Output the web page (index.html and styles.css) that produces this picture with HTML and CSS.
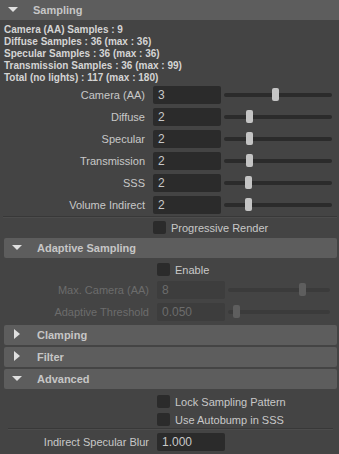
FILE: index.html
```html
<!DOCTYPE html>
<html lang="en">
<head>
  <meta charset="UTF-8" />
  <title>Render Settings - Sampling</title>
  <link rel="stylesheet" href="styles.css">
</head>
<body>
  <div class="frame">
    <div class="frame-head"><span class="arrow down"></span>Sampling</div>
    <div class="frame-body">
      <div class="info">
        <div>Camera (AA) Samples : 9</div>
        <div>Diffuse Samples : 36 (max : 36)</div>
        <div>Specular Samples : 36 (max : 36)</div>
        <div>Transmission Samples : 36 (max : 99)</div>
        <div>Total (no lights) : 117 (max : 180)</div>
      </div>
      <div class="rows">
        <div class="row">
          <span class="label">Camera (AA)</span>
          <span class="field">3</span>
          <span class="slider"><span class="thumb" style="left: 48px"></span></span>
        </div>
        <div class="row">
          <span class="label">Diffuse</span>
          <span class="field">2</span>
          <span class="slider"><span class="thumb" style="left: 22px"></span></span>
        </div>
        <div class="row">
          <span class="label">Specular</span>
          <span class="field">2</span>
          <span class="slider"><span class="thumb" style="left: 22px"></span></span>
        </div>
        <div class="row">
          <span class="label">Transmission</span>
          <span class="field">2</span>
          <span class="slider"><span class="thumb" style="left: 22px"></span></span>
        </div>
        <div class="row">
          <span class="label">SSS</span>
          <span class="field">2</span>
          <span class="slider"><span class="thumb" style="left: 21px"></span></span>
        </div>
        <div class="row">
          <span class="label">Volume Indirect</span>
          <span class="field">2</span>
          <span class="slider"><span class="thumb" style="left: 21px"></span></span>
        </div>
      </div>
      <div class="sep"></div>
      <div class="check-row first">
        <span class="box"></span>Progressive Render
      </div>

      <div class="frame sub adaptive-frame">
        <div class="frame-head"><span class="arrow down"></span>Adaptive Sampling</div>
        <div class="frame-body">
          <div class="check-row enable">
            <span class="box"></span>Enable
          </div>
          <div class="rows adaptive">
            <div class="row disabled">
              <span class="label">Max. Camera (AA)</span>
              <span class="field">8</span>
              <span class="slider"><span class="thumb" style="left: 71px"></span></span>
            </div>
            <div class="row disabled">
              <span class="label">Adaptive Threshold</span>
              <span class="field">0.050</span>
              <span class="slider"><span class="thumb" style="left: 5px"></span></span>
            </div>
          </div>
        </div>
      </div>

      <div class="frame sub closed">
        <div class="frame-head"><span class="arrow right"></span>Clamping</div>
      </div>
      <div class="frame sub closed">
        <div class="frame-head"><span class="arrow right"></span>Filter</div>
      </div>
      <div class="frame sub">
        <div class="frame-head"><span class="arrow down"></span>Advanced</div>
        <div class="frame-body">
          <div class="check-row lock">
            <span class="box"></span>Lock Sampling Pattern
          </div>
          <div class="check-row autobump">
            <span class="box"></span>Use Autobump in SSS
          </div>
          <div class="sep inner"></div>
          <div class="row blur">
            <span class="label">Indirect Specular Blur</span>
            <span class="field">1.000</span>
          </div>
        </div>
      </div>
    </div>
  </div>
</body>
</html>
```

FILE: styles.css
```css
* { box-sizing: border-box; }
html, body {
  margin: 0;
  padding: 0;
  background: #444444;
  color: #c8c8c8;
  font-family: "Liberation Sans", Arial, sans-serif;
  font-size: 11px;
  height: 100%;
  overflow: hidden;
}
.frame-head {
  position: relative;
  height: 20px;
  line-height: 20px;
  background: #5d5d5d;
  padding-left: 33px;
  font-weight: bold;
  font-size: 11px;
  color: #c6c6c6;
}
.sub .frame-head { border-radius: 2px; }
.arrow {
  position: absolute;
  width: 0;
  height: 0;
}
.arrow.down {
  left: 8px;
  top: 7px;
  border-left: 5px solid transparent;
  border-right: 5px solid transparent;
  border-top: 5px solid #e0e0e0;
}
.arrow.right {
  left: 10px;
  top: 4px;
  border-top: 5px solid transparent;
  border-bottom: 5px solid transparent;
  border-left: 6px solid #e0e0e0;
}
.info {
  padding: 4px 4px 0;
  font-size: 10px;
  font-weight: bold;
  line-height: 12px;
  color: #d4d4d4;
}
.rows {
  display: flex;
  flex-direction: column;
  gap: 4px;
  margin-top: 2px;
}
.row {
  display: flex;
  align-items: center;
  height: 18px;
}
.label {
  width: 145px;
  text-align: right;
  margin-right: 8px;
  white-space: nowrap;
}
.field {
  width: 68px;
  height: 18px;
  line-height: 19px;
  background: #2b2b2b;
  border-radius: 2px;
  padding-left: 5px;
  font-size: 12px;
  color: #c8c8c8;
}
.slider {
  position: relative;
  flex: 1;
  height: 4px;
  margin: 0 7px 0 3px;
  background: #2b2b2b;
  border-radius: 2px;
}
.thumb {
  position: absolute;
  top: -5px;
  width: 7px;
  height: 13px;
  background: #c4c4c4;
  border-radius: 2px;
}
.disabled .label { color: #6c6c6c; }
.disabled .field { background: #3d3d3d; color: #6c6c6c; }
.disabled .slider { background: #3b3b3b; }
.disabled .thumb { background: #5e5e5e; }
.sep {
  margin: 2px 2px 0 3px;
  border-top: 1px solid #383838;
  border-bottom: 1px solid #4c4c4c;
}
.sep.inner { margin: 2px 4px 0 4px; }
.check-row {
  display: flex;
  align-items: center;
  gap: 5px;
  height: 13px;
  padding-left: 153px;
  white-space: nowrap;
}
.box {
  width: 13px;
  height: 13px;
  background: #2b2b2b;
  border-radius: 2px;
}
.check-row.first { margin-top: 3px; }
.frame.sub {
  margin: 2px 2px 0 4px;
}
.frame.adaptive-frame { margin-top: 4px; }
.sub .frame-body { padding-bottom: 2px; }
.check-row.enable { margin-top: 5px; }
.rows.adaptive { margin-top: 5px; }
.check-row.lock { margin-top: 6px; }
.check-row.autobump { margin-top: 5px; }
.row.blur { margin-top: 3px; }
```
